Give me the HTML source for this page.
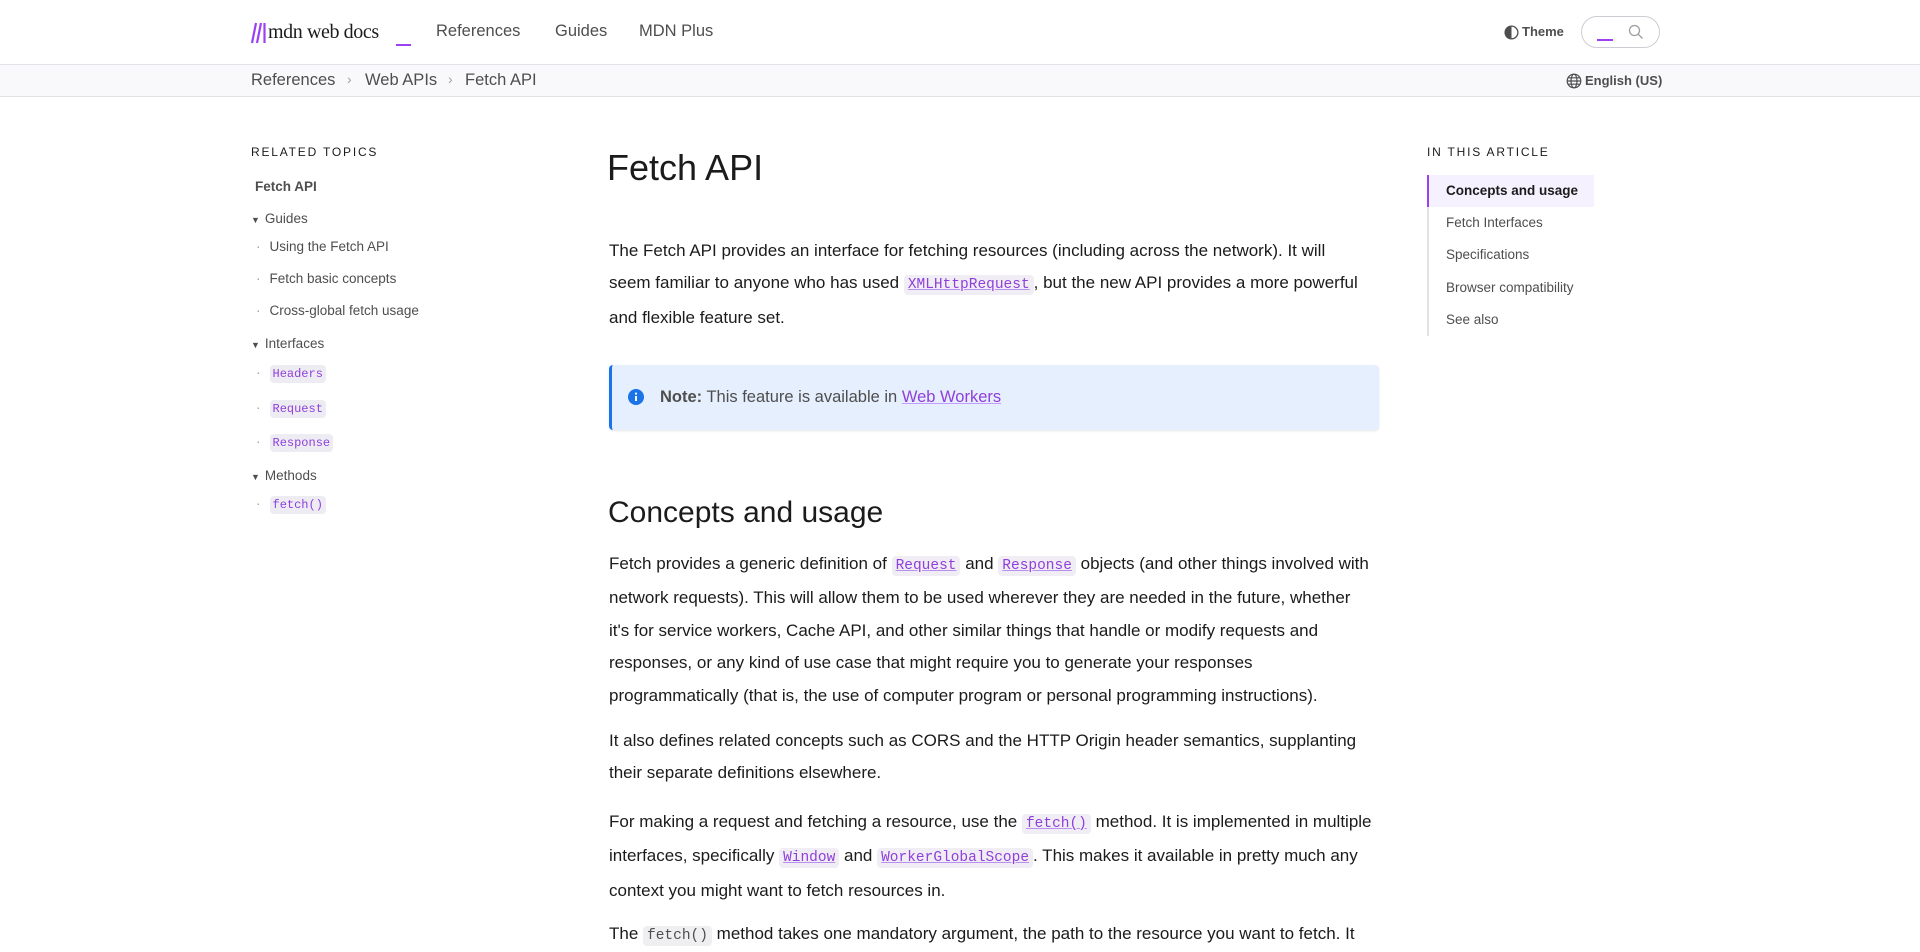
<!DOCTYPE html>
<html><head><meta charset="utf-8">
<style>
*{box-sizing:border-box;margin:0;padding:0}
body{width:1920px;height:951px;overflow:hidden;background:#fff;font-family:"Liberation Sans",sans-serif;color:#1b1b1b;position:relative}
.a{position:absolute;white-space:nowrap}
.hdr{position:absolute;left:0;top:0;width:1920px;height:64px;background:#fff}
.bc{position:absolute;left:0;top:64px;width:1920px;height:33px;background:#f9f9fb;border-top:1px solid #e2e2e6;border-bottom:1px solid #e2e2e6}
.nav{font-size:16.5px;color:#4e4e4e;top:22px}
.bct{font-size:16.5px;color:#4e4e4e;top:71px}
.side{font-size:13.5px;color:#4e4e4e;line-height:20px}
code{font-family:"Liberation Mono",monospace}
.sc{font-size:12px;color:#8f3fdb;background:#eeecf3;border-radius:4px;padding:2px 3px}
.p{font-size:17px;line-height:32.4px;color:#1b1b1b;left:609px}
.c{font-size:14.5px;background:#f0eef4;border-radius:4px;padding:2px 4px;color:#8f3fdb;text-decoration:underline;text-decoration-color:#b98ff0}
.cg{font-size:14.5px;background:#efeff1;border-radius:4px;padding:2px 4px;color:#4e4e4e}
.toc{font-size:13.5px;color:#4e4e4e;left:1446px;line-height:20px}
.dot{color:#9e9e9e;margin-right:9px}
</style></head><body>
<div class="hdr"></div>
<div class="bc"></div>
<!-- logo -->
<svg class="a" style="left:251px;top:22px" width="15" height="22" viewBox="0 0 15 22"><path d="M5 1 L1 21 M10 1 L6 21 M13.5 1 L13.5 21" stroke="#9b40f2" stroke-width="2.2" fill="none"/></svg>
<div class="a" style="left:268px;top:21px;font-family:'Liberation Serif',serif;font-size:20px;color:#1b1b1b;letter-spacing:-0.4px">mdn web docs</div>
<div class="a" style="left:396px;top:44px;width:15px;height:2px;background:#9b40f2"></div>
<div class="a nav" style="left:436px">References</div>
<div class="a nav" style="left:555px">Guides</div>
<div class="a nav" style="left:639px">MDN Plus</div>
<svg class="a" style="left:1504px;top:25px" width="15" height="15" viewBox="0 0 16 16"><circle cx="8" cy="8" r="6.8" fill="none" stroke="#4e4e4e" stroke-width="1.4"/><path d="M8 1.2 A6.8 6.8 0 0 0 8 14.8Z" fill="#4e4e4e"/></svg>
<div class="a" style="left:1522px;top:24px;font-size:13px;font-weight:bold;color:#4e4e4e">Theme</div>
<div class="a" style="left:1581px;top:16px;width:79px;height:32px;border:1px solid #cdcdd3;border-radius:16px"></div>
<div class="a" style="left:1597px;top:39px;width:16px;height:2px;background:#9b40f2"></div>
<svg class="a" style="left:1628px;top:24px" width="16" height="16" viewBox="0 0 16 16"><circle cx="6.5" cy="6.5" r="5" fill="none" stroke="#9e9e9e" stroke-width="1.3"/><path d="M10.2 10.2 L14.5 14.5" stroke="#9e9e9e" stroke-width="1.3"/></svg>
<div class="a bct" style="left:251px">References</div>
<div class="a" style="left:347px;top:71px;font-size:14px;color:#9e9e9e">›</div>
<div class="a bct" style="left:365px">Web APIs</div>
<div class="a" style="left:448px;top:71px;font-size:14px;color:#9e9e9e">›</div>
<div class="a bct" style="left:465px">Fetch API</div>
<svg class="a" style="left:1566px;top:73px" width="16" height="16" viewBox="0 0 16 16" fill="none" stroke="#4e4e4e" stroke-width="1.2"><circle cx="8" cy="8" r="6.8"/><ellipse cx="8" cy="8" rx="3" ry="6.8"/><path d="M1.2 8H14.8M2.2 4.8H13.8M2.2 11.2H13.8"/></svg>
<div class="a" style="left:1585px;top:73px;font-size:13px;font-weight:bold;color:#4e4e4e">English (US)</div>

<!-- left sidebar -->
<div class="a" style="left:251px;top:145px;font-size:12px;letter-spacing:1.8px;color:#1b1b1b">RELATED TOPICS</div>
<div class="a side" style="left:255px;top:177px;font-weight:bold;font-size:13.5px">Fetch API</div>
<div class="a side" style="left:251px;top:209px"><span style="font-size:9px;margin-right:5px">▼</span>Guides</div>
<div class="a side" style="left:256px;top:237px"><span class="dot">·</span>Using the Fetch API</div>
<div class="a side" style="left:256px;top:269px"><span class="dot">·</span>Fetch basic concepts</div>
<div class="a side" style="left:256px;top:301px"><span class="dot">·</span>Cross-global fetch usage</div>
<div class="a side" style="left:251px;top:334px"><span style="font-size:9px;margin-right:5px">▼</span>Interfaces</div>
<div class="a side" style="left:256px;top:363px"><span class="dot">·</span><code class="sc">Headers</code></div>
<div class="a side" style="left:256px;top:398px"><span class="dot">·</span><code class="sc">Request</code></div>
<div class="a side" style="left:256px;top:432px"><span class="dot">·</span><code class="sc">Response</code></div>
<div class="a side" style="left:251px;top:466px"><span style="font-size:9px;margin-right:5px">▼</span>Methods</div>
<div class="a side" style="left:256px;top:494px"><span class="dot">·</span><code class="sc">fetch()</code></div>

<!-- main -->
<div class="a" style="left:607px;top:146px;font-size:36px;line-height:44px;color:#1b1b1b">Fetch API</div>
<div class="a p" style="top:235px">The Fetch API provides an interface for fetching resources (including across the network). It will<br>seem familiar to anyone who has used <code class="c">XMLHttpRequest</code>, but the new API provides a more powerful<br>and flexible feature set.</div>
<div class="a" style="left:609px;top:365px;width:770px;height:65px;background:#e6effd;border-left:3px solid #1a73e8;border-radius:4px;box-shadow:0 1px 2px rgba(0,0,0,.1)"></div>
<svg class="a" style="left:628px;top:389px" width="16" height="16" viewBox="0 0 16 16"><circle cx="8" cy="8" r="8" fill="#1a73e8"/><rect x="7" y="7" width="2" height="5" fill="#fff"/><circle cx="8" cy="4.6" r="1.1" fill="#fff"/></svg>
<div class="a" style="left:660px;top:388px;font-size:16.5px;color:#4e4e4e"><b>Note:</b> This feature is available in <span style="color:#8f3fdb;text-decoration:underline;text-decoration-color:#c49bff">Web Workers</span></div>
<div class="a" style="left:608px;top:493px;font-size:30px;line-height:40px;color:#1b1b1b">Concepts and usage</div>
<div class="a p" style="top:548px">Fetch provides a generic definition of <code class="c">Request</code> and <code class="c">Response</code> objects (and other things involved with<br>network requests). This will allow them to be used wherever they are needed in the future, whether<br>it's for service workers, Cache API, and other similar things that handle or modify requests and<br>responses, or any kind of use case that might require you to generate your responses<br>programmatically (that is, the use of computer program or personal programming instructions).</div>
<div class="a p" style="top:725px">It also defines related concepts such as CORS and the HTTP Origin header semantics, supplanting<br>their separate definitions elsewhere.</div>
<div class="a p" style="top:806px">For making a request and fetching a resource, use the <code class="c">fetch()</code> method. It is implemented in multiple<br>interfaces, specifically <code class="c">Window</code> and <code class="c">WorkerGlobalScope</code>. This makes it available in pretty much any<br>context you might want to fetch resources in.</div>
<div class="a p" style="top:918px">The <code class="cg">fetch()</code> method takes one mandatory argument, the path to the resource you want to fetch. It</div>

<!-- toc -->
<div class="a" style="left:1427px;top:145px;font-size:12px;letter-spacing:1.8px;color:#1b1b1b">IN THIS ARTICLE</div>
<div class="a" style="left:1427px;top:175px;width:2px;height:161px;background:#e2e2e6"></div>
<div class="a" style="left:1427px;top:175px;width:167px;height:32px;background:#f6f1ff;border-left:2px solid #9b40f2"></div>
<div class="a toc" style="top:181px;font-weight:bold;color:#1b1b1b">Concepts and usage</div>
<div class="a toc" style="top:213px">Fetch Interfaces</div>
<div class="a toc" style="top:245px">Specifications</div>
<div class="a toc" style="top:278px">Browser compatibility</div>
<div class="a toc" style="top:310px">See also</div>
</body></html>
